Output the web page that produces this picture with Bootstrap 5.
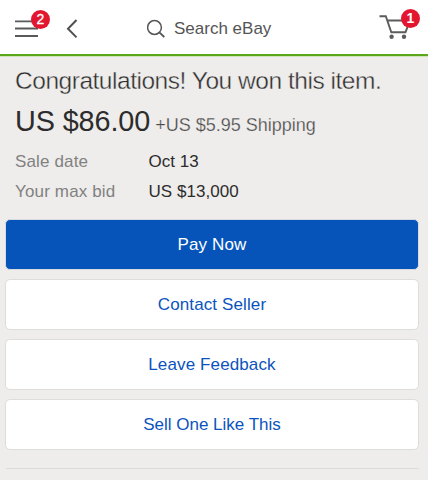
<!DOCTYPE html>
<html lang="en">
<head>
<meta charset="utf-8">
<meta name="viewport" content="width=device-width, initial-scale=1">
<title>eBay</title>
<link href="https://cdn.jsdelivr.net/npm/bootstrap@5.3.0/dist/css/bootstrap.min.css" rel="stylesheet">
<style>
body{background:#eeedeb;color:#2c2c2c;font-family:"Liberation Sans",Arial,sans-serif;font-size:17px;line-height:20px;overflow:hidden}
.topbar{height:56px;border-bottom:2px solid #5ba71b;box-shadow:0 1px #cfe5b8;padding:0 7px 0 14px}
.icon-btn{background:none;border:0;padding:0;line-height:0}
.menu-btn{width:36px;height:54px}
.back-btn{margin-left:14px}
.search-btn{margin-left:67px;color:#555;gap:9px}
.search-btn span{line-height:20px;padding-top:3px}
.cart-btn{width:42px;height:54px}
.count{width:19px;height:19px;background:#e2172f;font-size:14px;line-height:19px;-webkit-text-stroke:.3px #fff}
.menu-btn .count{left:17px;top:10px}
.cart-btn .count{right:1px;top:9px;font-weight:700;-webkit-text-stroke:0}
.summary{padding:10px 15px 0}
.headline{font-size:24.5px;line-height:30px;letter-spacing:-.47px;font-weight:400;-webkit-text-stroke:.4px #eeedeb}
.price{font-size:28.8px;line-height:36px;letter-spacing:-.1px}
.ship{font-size:18px;color:#484848;margin-left:5px;-webkit-text-stroke:.25px #eeedeb}
.cost{margin-top:7px}
.facts{grid-template-columns:133.5px 1fr;row-gap:9.5px;margin-top:13px}
.facts dt{color:#818181;letter-spacing:.15px}
.facts dd{letter-spacing:.05px}
.actions{padding:17px 9px 0 5px;gap:9px}
.action{height:51px;border-radius:5px;padding:8px 12px 6px;font-size:17px;letter-spacing:.12px;--bs-btn-border-color:#dddddb;--bs-btn-bg:#fff;--bs-btn-color:#0b54bd;--bs-btn-hover-bg:#f7f7f7;--bs-btn-hover-color:#0b54bd}
.action:last-child{letter-spacing:0}
.action-main{--bs-btn-border-color:#d7dbe0;--bs-btn-bg:#0654ba;--bs-btn-color:#fff;--bs-btn-hover-bg:#054aa5;--bs-btn-hover-color:#fff}
.rule{height:1px;background:#dcdbd9;margin:18px 9px 0 6px}
</style>
</head>
<body>
<header class="topbar bg-white d-flex align-items-center">
  <button class="icon-btn menu-btn position-relative text-start" aria-label="Menu">
    <svg width="25" height="54" viewBox="0 0 25 54" fill="none" stroke="#5a5a5a" stroke-width="1.8"><path d="M1 21.3h23M1 28.5h23M1 36h23"/></svg>
    <span class="count position-absolute rounded-circle text-white text-center">2</span>
  </button>
  <button class="icon-btn back-btn" aria-label="Back">
    <svg width="16" height="54" viewBox="0 0 16 54" fill="none" stroke="#505050" stroke-width="2"><path d="M12.5 20L4 28.8l8.5 8.6"/></svg>
  </button>
  <button class="icon-btn search-btn d-flex align-items-center">
    <svg width="18" height="54" viewBox="0 0 18 54" fill="none" stroke="#555" stroke-width="1.5"><circle cx="7.5" cy="27.5" r="6.9"/><path d="M12.3 32.3L17.3 37" stroke-width="1.8"/></svg>
    <span>Search eBay</span>
  </button>
  <button class="icon-btn cart-btn position-relative text-start ms-auto" aria-label="Cart">
    <svg width="42" height="54" viewBox="0 0 42 54" fill="none" stroke="#5c5c5c" stroke-width="1.9"><path d="M.5 16.2H6.8L12.3 32.2H26.5L31 20.5H8.5"/><g fill="#5c5c5c" stroke="none"><circle cx="12.6" cy="36.7" r="2.2"/><circle cx="25" cy="36.7" r="2.2"/></g></svg>
    <span class="count position-absolute rounded-circle text-white text-center">1</span>
  </button>
</header>
<main>
  <section class="summary">
    <h1 class="headline text-nowrap mb-0">Congratulations! You won this item.</h1>
    <div class="cost d-flex align-items-baseline text-nowrap">
      <span class="price">US $86.00</span><span class="ship">+US $5.95 Shipping</span>
    </div>
    <dl class="facts d-grid mb-0">
      <dt class="fw-normal">Sale date</dt><dd class="mb-0">Oct 13</dd>
      <dt class="fw-normal">Your max bid</dt><dd class="mb-0">US $13,000</dd>
    </dl>
  </section>
  <div class="actions d-flex flex-column">
    <button class="btn action action-main">Pay Now</button>
    <button class="btn action">Contact Seller</button>
    <button class="btn action">Leave Feedback</button>
    <button class="btn action">Sell One Like This</button>
  </div>
  <div class="rule"></div>
</main>
<script src="https://cdn.jsdelivr.net/npm/bootstrap@5.3.0/dist/js/bootstrap.bundle.min.js"></script>
</body>
</html>
